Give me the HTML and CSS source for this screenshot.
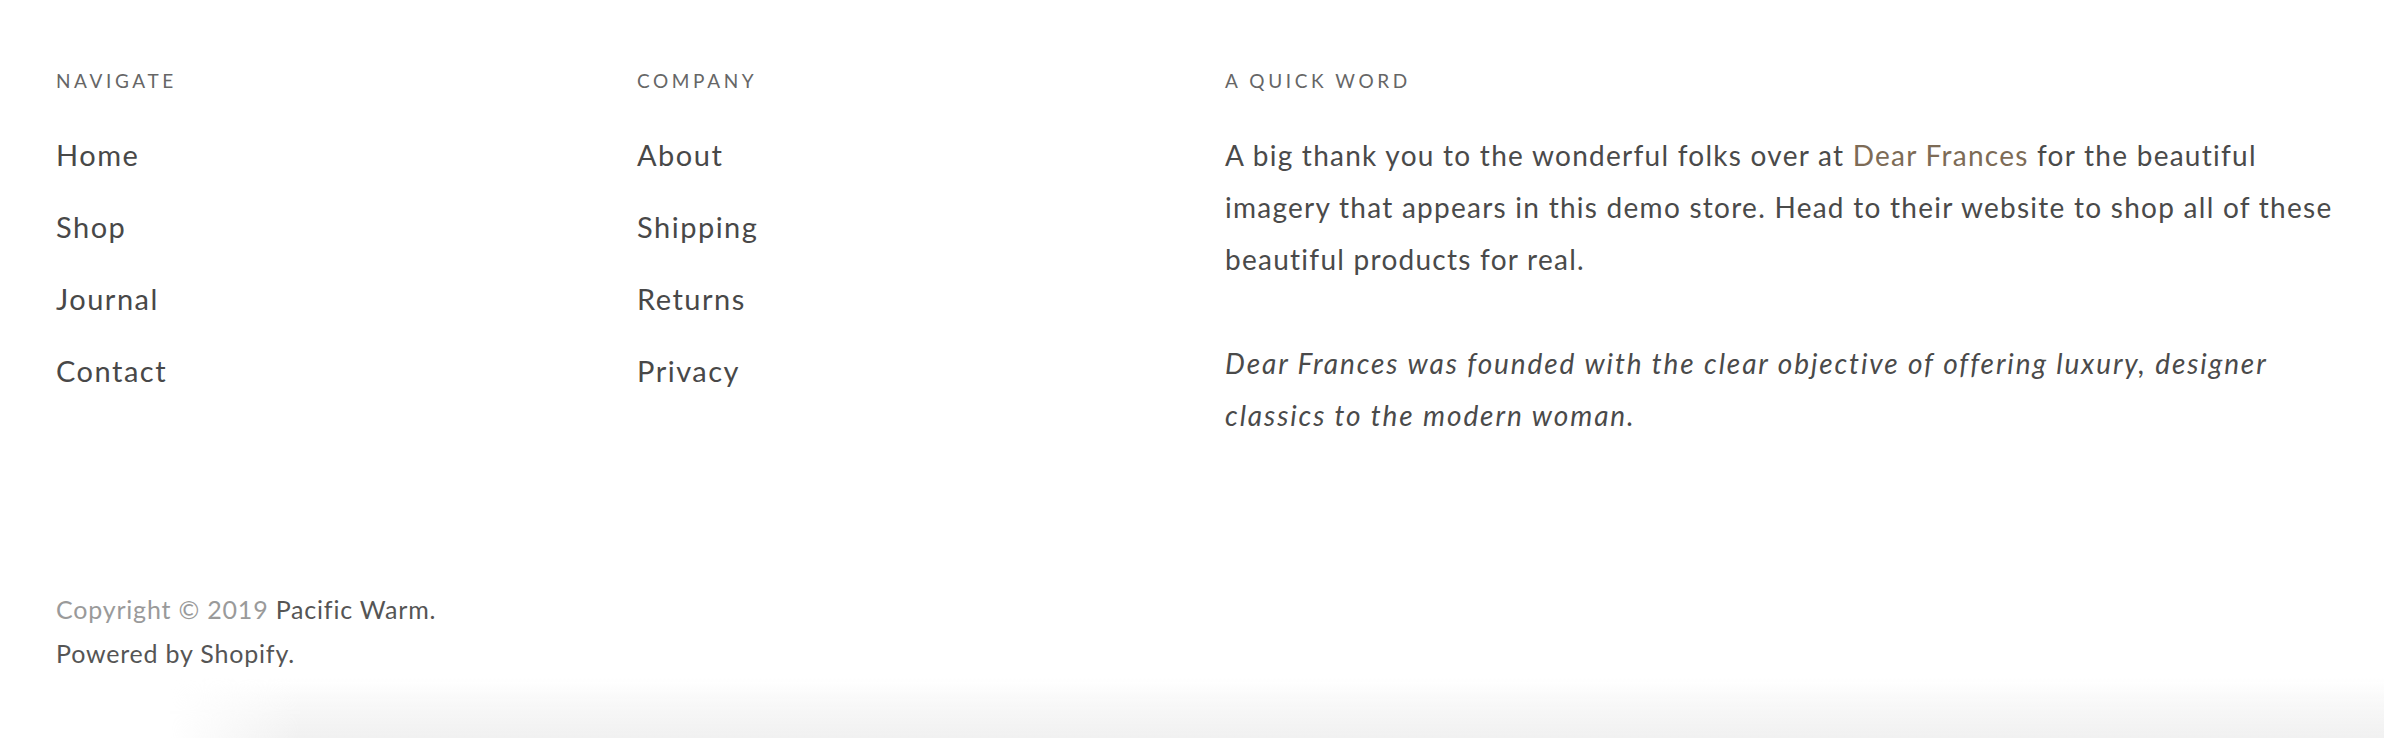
FILE: index.html
```html
<!DOCTYPE html>
<html lang="en">
<head>
<meta charset="utf-8">
<title>Footer</title>
<link rel="stylesheet" href="styles.css">
</head>
<body>
<footer class="site-footer">
  <div class="footer-grid">
    <div class="footer-col">
      <h4 class="footer-heading">Navigate</h4>
      <ul class="footer-links">
        <li><a href="#">Home</a></li>
        <li><a href="#">Shop</a></li>
        <li><a href="#">Journal</a></li>
        <li><a href="#">Contact</a></li>
      </ul>
    </div>
    <div class="footer-col">
      <h4 class="footer-heading">Company</h4>
      <ul class="footer-links">
        <li><a href="#">About</a></li>
        <li><a href="#">Shipping</a></li>
        <li><a href="#">Returns</a></li>
        <li><a href="#">Privacy</a></li>
      </ul>
    </div>
    <div class="footer-col footer-col--text">
      <h4 class="footer-heading">A Quick Word</h4>
      <div class="footer-text">
        <p>A big thank you to the wonderful folks over at <a class="accent" href="#">Dear Frances</a> for the beautiful imagery that appears in this demo store. Head to their website to shop all of these beautiful products for real.</p>
        <p class="footer-quote"><em>Dear Frances was founded with the clear objective of offering luxury, designer classics to the modern woman.</em></p>
      </div>
    </div>
  </div>
  <div class="footer-legal">
    <p><span class="muted">Copyright © 2019</span> <a href="#">Pacific Warm</a>.</p>
    <p><a href="#">Powered by Shopify</a>.</p>
  </div>
</footer>
<div class="drawer-shadow"></div>
</body>
</html>
```

FILE: styles.css
```css
html, body {
  margin: 0;
  padding: 0;
  background: #ffffff;
  overflow: hidden;
}

body {
  font-family: "Lato", "Noto Sans", sans-serif;
  color: #444444;
  height: 738px;
  position: relative;
}

a {
  color: inherit;
  text-decoration: none;
}

.site-footer {
  padding: 69px 56px 0 56px;
}

.footer-grid {
  display: grid;
  grid-template-columns: 581px 588px 1120px;
}

.footer-heading {
  margin: 0 0 36px 0;
  font-size: 19px;
  line-height: 24px;
  font-weight: 400;
  letter-spacing: 0.19em;
  text-transform: uppercase;
  color: #666666;
}

.footer-links {
  list-style: none;
  margin: 0;
  padding: 0;
}

.footer-links li {
  font-size: 29px;
  line-height: 52px;
  margin-bottom: 20px;
  font-weight: 400;
  letter-spacing: 1.5px;
  color: #484848;
}

.footer-text p {
  margin: 0 0 52px 0;
  font-size: 28px;
  line-height: 52px;
  letter-spacing: 1.26px;
  color: #4a4a4a;
}

.footer-text .footer-quote {
  letter-spacing: 1.9px;
}

.footer-text em {
  font-style: italic;
}

.accent {
  color: #7d6b56;
}

.footer-legal {
  margin-top: 94px;
}

.footer-legal p {
  margin: 0;
  font-size: 25px;
  line-height: 44px;
  letter-spacing: 0.8px;
  color: #555555;
}

.muted {
  color: #9a9a9a;
}

.drawer-shadow {
  position: absolute;
  left: 0;
  right: 0;
  bottom: 0;
  height: 60px;
  background: linear-gradient(to bottom, rgba(238, 238, 238, 0) 0%, rgba(238, 238, 238, 0.5) 55%, rgba(238, 238, 238, 0.85) 100%);
  -webkit-mask-image: linear-gradient(to right, transparent 170px, #000 300px);
  mask-image: linear-gradient(to right, transparent 170px, #000 300px);
}
```
